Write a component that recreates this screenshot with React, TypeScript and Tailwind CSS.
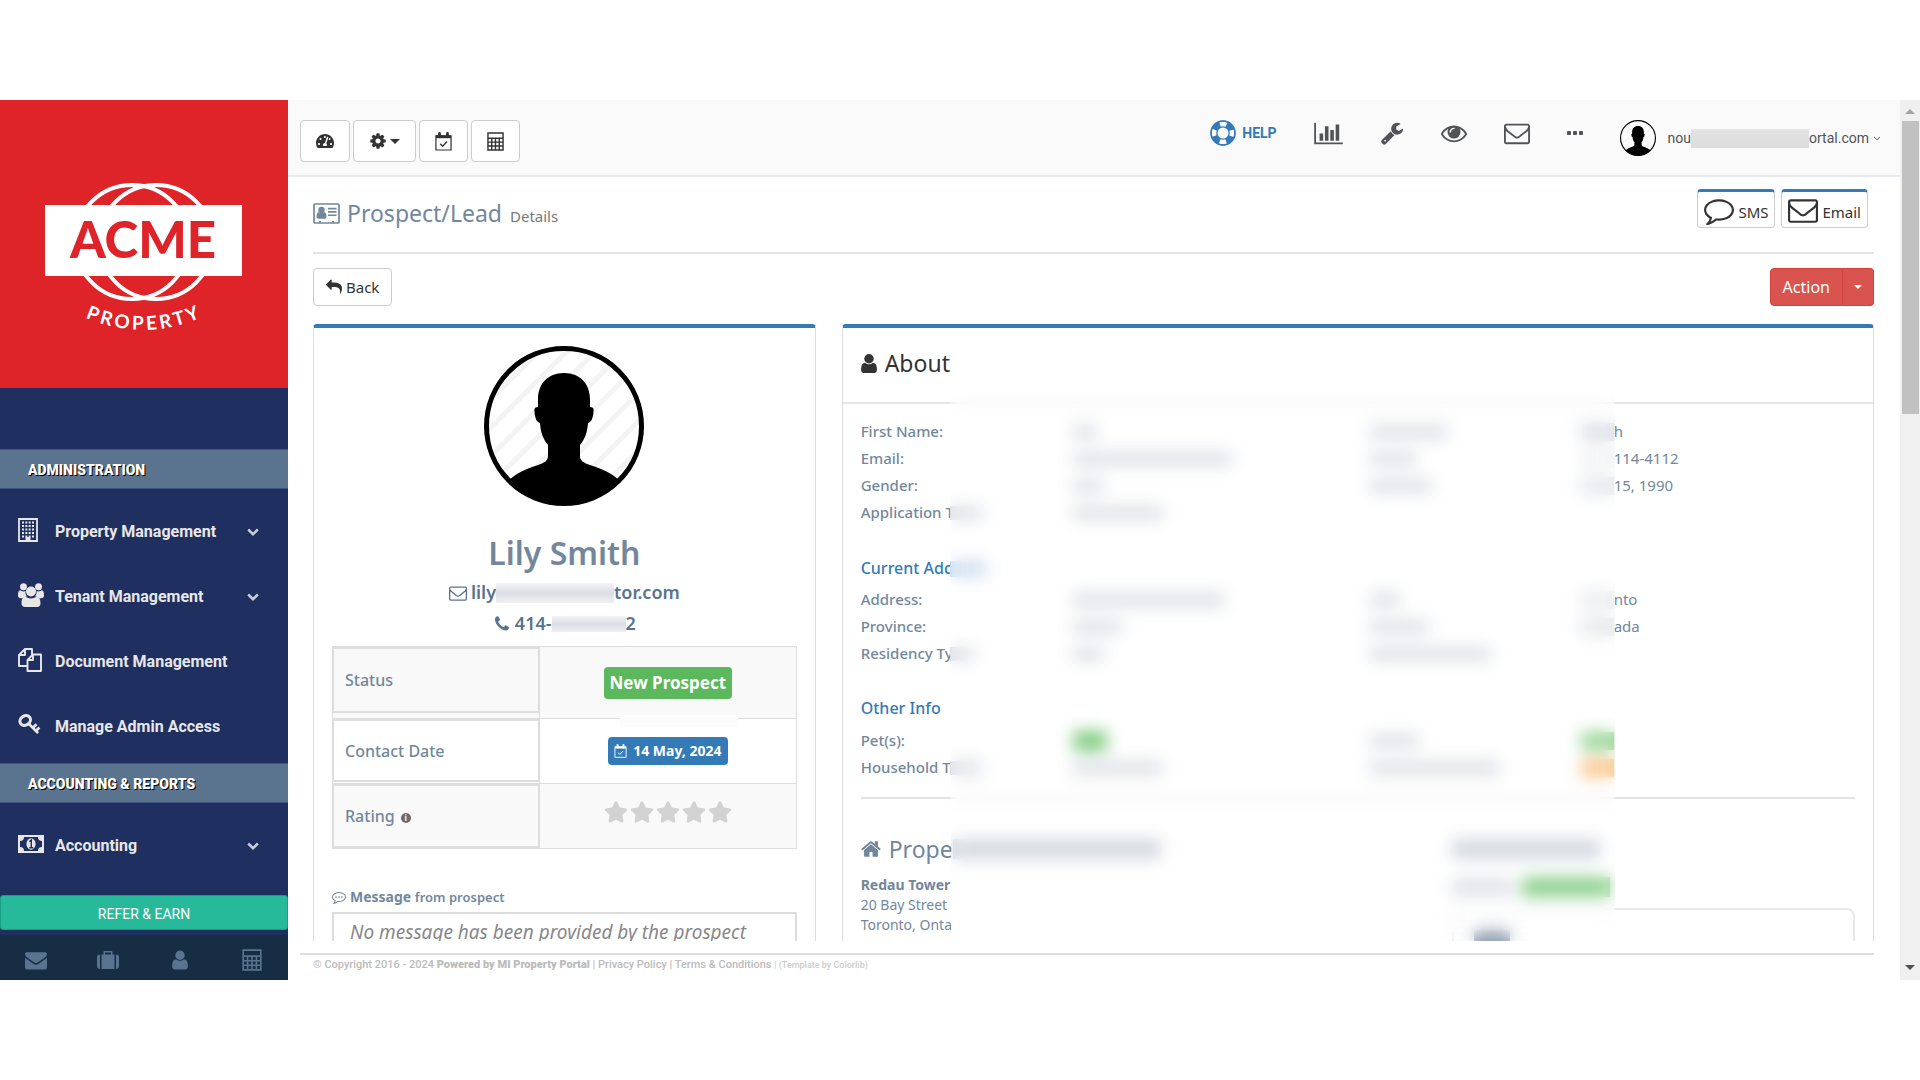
import type { ReactNode } from "react";
import { FaStar, FaTachometerAlt } from "react-icons/fa";

type IconProps = { className?: string };

function Glyph({ d, box = "0 0 1792 1792", className }: { d: string; box?: string; className?: string }) {
  return (
    <svg viewBox={box} className={className} fill="currentColor" aria-hidden="true">
      <path d={d} />
    </svg>
  );
}

const paths = {
  envelopeO:
    "M1664 1504v-768q-32 36-69 66-268 206-426 338-51 43-83 67t-86.5 48.5-102.5 24.5h-2q-48 0-102.5-24.5t-86.5-48.5-83-67q-158-132-426-338-37-30-69-66v768q0 13 9.5 22.5t22.5 9.5h1472q13 0 22.5-9.5t9.5-22.5zm0-1051v-24.5l-.5-13-3-12.5-5.5-9-9-7.5-14-2.5h-1472q-13 0-22.5 9.5t-9.5 22.5q0 168 147 284 193 152 401 317 6 5 35 29.5t46 37.5 44.5 31.5 50.5 27.5 43 9h2q20 0 43-9t50.5-27.5 44.5-31.5 46-37.5 35-29.5q208-165 401-317 54-43 100.5-115.5t46.5-131.5zm128-37v1088q0 66-47 113t-113 47h-1472q-66 0-113-47t-47-113v-1088q0-66 47-113t113-47h1472q66 0 113 47t47 113z",
  envelope:
    "M1792 710v794q0 66-47 113t-113 47h-1472q-66 0-113-47t-47-113v-794q44 49 101 87 362 246 497 345 57 42 92.5 65.5t94.5 48 110 24.5h2q51 0 110-24.5t94.5-48 92.5-65.5q170-123 498-345 57-39 100-87zm0-294q0 79-49 151t-122 123q-376 261-468 325-10 7-42.5 31t-54 38.5-52 32.5-57.5 27-50 9h-2q-23 0-50-9t-57.5-27-52-32.5-54-38.5-42.5-31q-91-64-262-182.5t-205-142.5q-62-42-117-115.5t-55-136.5q0-78 41.5-130t118.5-52h1472q65 0 112.5 47t47.5 113z",
  phone:
    "M1600 1240q0 27-10 70.5t-21 68.5q-21 50-122 106-94 51-186 51-27 0-53-3.5t-57.5-12.5-47-14.5-55.5-20.5-49-18q-98-35-175-83-127-79-264-216t-216-264q-48-77-83-175-3-9-18-49t-20.5-55.5-14.5-47-12.5-57.5-3.5-53q0-92 51-186 56-101 106-122 25-11 68.5-21t70.5-10q14 0 21 3 18 6 53 76 11 19 30 54t35 63.5 31 53.5q3 4 17.5 25t21.5 35.5 7 28.5q0 20-28.5 50t-62 55-62 53-28.5 46q0 9 5 22.5t8.5 20.5 14 24 11.5 19q76 137 174 235t235 174q2 1 19 11.5t24 14 20.5 8.5 22.5 5q18 0 46-28.5t53-62 55-62 50-28.5q14 0 28.5 7t35.5 21.5 25 17.5q25 15 53.5 31t63.5 35 54 30q70 35 76 53 3 7 3 21z",
  user:
    "M1536 1399q0 109-62.5 187t-150.5 78h-854q-88 0-150.5-78t-62.5-187q0-85 8.5-160.5t31.5-152 58.5-131 94-89 134.5-34.5q131 128 313 128t313-128q76 0 134.5 34.5t94 89 58.5 131 31.5 152 8.5 160.5zm-256-887q0 159-112.5 271.5t-271.5 112.5-271.5-112.5-112.5-271.5 112.5-271.5 271.5-112.5 271.5 112.5 112.5 271.5z",
  home:
    "M1472 992v480q0 26-19 45t-45 19h-384v-384h-256v384h-384q-26 0-45-19t-19-45v-480q0-1 .5-3t.5-3l575-474 575 474q1 2 1 6zm223-69l-62 74q-8 9-21 11h-3q-13 0-21-7l-692-577-692 577q-12 8-24 7-13-2-21-11l-62-74q-8-10-7-23.5t11-21.5l719-599q32-26 76-26t76 26l244 204v-195q0-14 9-23t23-9h192q14 0 23 9t9 23v408l219 182q10 8 11 21.5t-7 23.5z",
  cog:
    "M1152 896q0-106-75-181t-181-75-181 75-75 181 75 181 181 75 181-75 75-181zm512-109v222q0 12-8 23t-20 13l-185 28q-19 54-39 91 35 50 107 138 10 12 10 25t-9 23q-27 37-99 108t-94 71q-12 0-26-9l-138-108q-44 23-91 38-16 136-29 186-7 28-36 28h-222q-14 0-24.5-8.5t-11.5-21.5l-28-184q-49-16-90-37l-141 107q-10 9-25 9-14 0-25-11-126-114-165-168-7-10-7-23 0-12 8-23 15-21 51-66.5t54-70.5q-27-50-41-99l-183-27q-13-2-21-12.5t-8-23.5v-222q0-12 8-23t19-13l186-28q14-46 39-92-40-57-107-138-10-12-10-24 0-10 9-23 26-36 98.5-107.5t94.5-71.5q13 0 26 10l138 107q44-23 91-38 16-136 29-186 7-28 36-28h222q14 0 24.5 8.5t11.5 21.5l28 184q49 16 90 37l142-107q9-9 24-9 13 0 25 10 129 119 165 170 7 8 7 22 0 12-8 23-15 21-51 66.5t-54 70.5q26 50 41 98l183 28q13 2 21 12.5t8 23.5z",
  wrench:
    "M448 1472q0-26-19-45t-45-19-45 19-19 45 19 45 45 19 45-19 19-45zm644-420l-682 682q-37 37-90 37-52 0-91-37l-106-108q-38-36-38-90 0-53 38-91l681-681q39 98 114.5 173.5t173.5 114.5zm634-435q0 39-23 106-47 134-164.5 217.5t-258.5 83.5q-185 0-316.5-131.5t-131.5-316.5 131.5-316.5 316.5-131.5q58 0 121.5 16.5t107.5 46.5q16 11 16 28t-16 28l-293 169v224l193 107q5-3 79-48.5t135.5-81 70.5-35.5q15 0 23.5 10t8.5 25z",
  reply:
    "M1792 1120q0 166-127 451-3 7-10.5 24t-13.5 30-13 22q-12 17-28 17-15 0-23.5-10t-8.5-25q0-9 2.5-26.5t2.5-23.5q5-68 5-123 0-101-17.5-181t-48.5-138.5-80-101-105.5-69.5-133-42.5-154-21.5-175.5-6h-224v256q0 26-19 45t-45 19-45-19l-512-512q-19-19-19-45t19-45l512-512q19-19 45-19t45 19 19 45v256h224q713 0 875 403 53 134 53 333z",
  commentO:
    "M896 384q-204 0-381.5 69.5t-282 187.5-104.5 255q0 112 71.5 213.5t201.5 175.5l87 50-27 96q-24 91-70 172 152-63 275-171l43-38 57 6q69 8 130 8 204 0 381.5-69.5t282-187.5 104.5-255-104.5-255-282-187.5-381.5-69.5zm896 512q0 174-120 321.5t-326 233-450 85.5q-70 0-145-8-198 175-460 242-49 14-114 22h-5q-15 0-27-10.5t-16-27.5v-1q-3-4-.5-12t2-10 4.5-9.5l6-9 7-8.5 8-9q7-8 31-34.5t34.5-38 31-39.5 32.5-51 27-59 26-76q-157-89-247.5-220t-90.5-281q0-174 120-321.5t326-233 450-85.5 450 85.5 326 233 120 321.5z",
  eye:
    "M1664 960q-152-236-381-353 61 104 61 225 0 185-131.5 316.5t-316.5 131.5-316.5-131.5-131.5-316.5q0-121 61-225-229 117-381 353 133 205 333.5 326.5t434.5 121.5 434.5-121.5 333.5-326.5zm-720-384q0-20-14-34t-34-14q-125 0-214.5 89.5t-89.5 214.5q0 20 14 34t34 14 34-14 14-34q0-86 61-147t147-61q20 0 34-14t14-34zm848 384q0 34-20 69-140 230-376.5 368.5t-499.5 138.5-499.5-139-376.5-368q-20-35-20-69t20-69q140-229 376.5-368t499.5-139 499.5 139 376.5 368q20 35 20 69z",
  barChart:
    "M640 896v512h-256v-512h256zm384-512v1024h-256v-1024h256zm1024 1152v128h-2048v-1536h128v1408h1920zm-640-896v768h-256v-768h256zm384-384v1152h-256v-1152h256z",
};

function Chevron({ className }: IconProps) {
  return (
    <svg viewBox="0 0 12 8" className={className} fill="none" stroke="currentColor" aria-hidden="true">
      <path d="M1.200 1.500L6 6.200l4.800-4.700" />
    </svg>
  );
}

function LifeRing({ className }: IconProps) {
  return (
    <svg viewBox="0 0 26 26" className={className} fill="none" stroke="currentColor" aria-hidden="true">
      <circle cx="13" cy="13" r="9" strokeWidth="7" />
      <circle cx="13" cy="13" r="9" stroke="#fafafa" strokeWidth="4.5" strokeDasharray="6.6 7.54" strokeDashoffset="3.3" />
      <circle cx="13" cy="13" r="12" strokeWidth="1.5" />
    </svg>
  );
}

function CalendarCheck({ className }: IconProps) {
  return (
    <svg viewBox="0 0 18 20" className={className} fill="none" stroke="currentColor" aria-hidden="true">
      <path d="M1 4h16v15H1z" strokeWidth="1.3" />
      <path d="M1 3.500h16v3H1z" fill="currentColor" stroke="none" />
      <path d="M4.800 1.500v3.500M13.200 1.500v3.500" strokeWidth="3" strokeLinecap="round" />
      <path d="M5.500 12.300l2.600 2.700 4.600-5" strokeWidth="1.400" />
    </svg>
  );
}

function Calculator({ className }: IconProps) {
  return (
    <svg viewBox="0 0 18 20" className={className} fill="none" stroke="currentColor" aria-hidden="true">
      <path d="M1 1h16v18H1z" strokeWidth="1.5" />
      <path d="M1 6.500h16M1 10.700h16M1 14.800h16M5 6v13M9 6v13M13 6v13" strokeWidth="1.5" />
    </svg>
  );
}

function Building({ className }: IconProps) {
  return (
    <svg viewBox="0 0 20 24" className={className} fill="none" stroke="currentColor" aria-hidden="true">
      <path d="M1 1h18v22H1z" strokeWidth="1.800" />
      <path d="M4 4.500h12M4 8h12M4 11.500h12M4 15h12M4 18.500h12" strokeWidth="2" strokeDasharray="2 1.330" />
      <path d="M7.500 19h5v4h-5z" fill="currentColor" stroke="none" />
    </svg>
  );
}

function Users({ className }: IconProps) {
  return (
    <svg viewBox="0 0 26 24" className={className} fill="currentColor" aria-hidden="true">
      <circle cx="5.500" cy="3.700" r="3.500" />
      <circle cx="20.500" cy="3.700" r="3.500" />
      <path d="M0 12.500c0-3 .7-5.200 2-5.200 2 1.300 4 1.300 5.500.7-.4 2.300.2 4 1.500 5.600-1.700 0-2.800.5-3.800 1.600H3c-2 0-3-.9-3-2.700zM26 12.500c0-3-.7-5.200-2-5.200-2 1.300-4 1.300-5.500.7.4 2.300-.2 4-1.500 5.600 1.700 0 2.800.5 3.800 1.600H23c2 0 3-.9 3-2.700z" />
      <circle cx="13" cy="8.500" r="5" />
      <path d="M3.500 20.500c0-4 1.200-6.700 4.300-6.700 3 2.300 7.400 2.300 10.400 0 3.100 0 4.300 2.700 4.300 6.700 0 2-1.500 3.500-3.500 3.500H7c-2 0-3.500-1.500-3.500-3.500z" />
    </svg>
  );
}

function Files({ className }: IconProps) {
  return (
    <svg viewBox="0 0 24 24" className={className} fill="none" stroke="currentColor" strokeWidth="1.900" strokeLinejoin="round" aria-hidden="true">
      <path d="M9 18H1V7l6-6h7v6M7 1v6H1" />
      <path d="M15 6.500h8V23H9.500V12zM15 6.500V12H9.500" />
    </svg>
  );
}

function Key({ className }: IconProps) {
  return (
    <svg viewBox="0 0 24 22" className={className} fill="none" stroke="currentColor" aria-hidden="true">
      <ellipse cx="7.500" cy="6.800" rx="5.800" ry="4.800" strokeWidth="3.200" transform="rotate(-35 7.500 6.800)" />
      <path d="M10.500 9.500l10.500 10.500M16.200 13.800l3.200-3M19.400 17l3-2.800" strokeWidth="2.800" />
    </svg>
  );
}

function Money({ className }: IconProps) {
  return (
    <svg viewBox="0 0 26 18" className={className} aria-hidden="true">
      <path d="M0 0h26v18H0z" fill="currentColor" />
      <path d="M6 2h14a4 4 0 0 0 4 4v6a4 4 0 0 0-4 4H6a4 4 0 0 0-4-4V6a4 4 0 0 0 4-4z" fill="#1f2f60" />
      <ellipse cx="13" cy="9" rx="4.600" ry="5.800" fill="currentColor" />
      <path d="M11.400 6.600L13.300 5v7.500M11.300 12.700h4" stroke="#1f2f60" strokeWidth="1.400" fill="none" />
    </svg>
  );
}

function Suitcase({ className }: IconProps) {
  return (
    <svg viewBox="0 0 22 18" className={className} fill="currentColor" aria-hidden="true">
      <path d="M3 3.500V18a3 3 0 0 1-3-3V6.500a3 3 0 0 1 3-3zM19 3.500V18a3 3 0 0 0 3-3V6.500a3 3 0 0 0-3-3z" />
      <path d="M4.500 3.500h2V1.200C6.500.5 7 0 7.700 0h6.600c.7 0 1.200.5 1.200 1.200v2.300h2V18h-13zM8 1.500v2h6v-2z" fillRule="evenodd" />
    </svg>
  );
}

function AddressCard({ className }: IconProps) {
  return (
    <svg viewBox="0 0 27 21" className={className} fill="currentColor" aria-hidden="true">
      <path d="M2 1h23a1 1 0 0 1 1 1v17a1 1 0 0 1-1 1H2a1 1 0 0 1-1-1V2a1 1 0 0 1 1-1z" fill="none" stroke="currentColor" strokeWidth="1.700" />
      <circle cx="8.500" cy="7" r="3.200" />
      <path d="M3.500 13.500c0-2.500.8-4.300 2.400-4.300 1.500 1.200 3.600 1.200 5.200 0 1.600 0 2.400 1.800 2.400 4.300 0 1.200-.8 2.300-1.800 2.300H5.300c-1 0-1.800-1.100-1.800-2.300z" />
      <path d="M15 4.800h8.500v1.700H15zM15 8.100h8.500v1.700H15zM15 11.400h8.500v1.700H15zM6 18h2v2H6zM19 18h2v2h-2z" />
    </svg>
  );
}

function Avatar({ id, className }: { id: string; className?: string }) {
  return (
    <svg viewBox="0 0 160 160" className={className} role="img" aria-label="Profile photo">
      <defs>
        <pattern id={`${id}-lines`} width="20" height="20" patternUnits="userSpaceOnUse" patternTransform="rotate(45)">
          <path d="M0 0h5v20H0z" fill="#f3f3f3" />
        </pattern>
        <clipPath id={`${id}-clip`}>
          <circle cx="80" cy="80" r="78" />
        </clipPath>
      </defs>
      <circle cx="80" cy="80" r="78" fill="#fff" />
      <circle cx="80" cy="80" r="78" fill={`url(#${id}-lines)`} />
      <path
        clipPath={`url(#${id}-clip)`}
        d="M80 27c17 0 26 12 26 26v8c3 0 4 1 3.500 5-.5 6-2 10-5.500 11-.5 9-3 16-8 22v11c0 5 4 7 10 9 12 4 22 8 30 16v30H24v-30c8-8 18-12 30-16 6-2 10-4 10-9V99c-5-6-7.500-13-8-22-3.500-1-5-5-5.500-11-.5-4 .5-5 3.500-5v-8c0-14 9-26 26-26z"
      />
      <circle cx="80" cy="80" r="77.500" fill="none" stroke="#000" strokeWidth="5" />
    </svg>
  );
}

function Logo() {
  return (
    <svg viewBox="0 0 288 288" className="w-full bg-[#de2329]" role="img" aria-label="Acme Property">
      <g fill="none" stroke="#fff" strokeWidth="4">
        <circle cx="132" cy="142" r="57" />
        <circle cx="156" cy="142" r="57" />
      </g>
      <path d="M45 105h197v71H45z" fill="#fff" />
      <text x="143" y="158" textAnchor="middle" fill="#de2329" fontFamily="Lato, sans-serif" fontWeight="900" fontSize="51">
        ACME
      </text>
      <path id="logo-arc" d="M78 214A141 141 0 0 0 208 214" fill="none" />
      <text fill="#fff" fontFamily="Lato, sans-serif" fontWeight="700" fontSize="19" letterSpacing="3" textAnchor="middle">
        <textPath href="#logo-arc" startOffset="51%">
          PROPERTY
        </textPath>
      </text>
    </svg>
  );
}

type NavItem = { label: string; icon: ReactNode; expandable?: boolean };

const administration: NavItem[] = [
  { label: "Property Management", icon: <Building className="h-6 w-5" />, expandable: true },
  { label: "Tenant Management", icon: <Users className="h-6 w-[26px]" />, expandable: true },
  { label: "Document Management", icon: <Files className="size-6" /> },
  { label: "Manage Admin Access", icon: <Key className="h-[21px] w-[23px]" /> },
];

const accounting: NavItem[] = [
  { label: "Accounting", icon: <Money className="h-[18px] w-[26px]" />, expandable: true },
];

function NavSection({ title, items }: { title: string; items: NavItem[] }) {
  return (
    <section>
      <h3 className="flex h-10 items-center border-y border-[#3f5680] bg-[#5a738e] pt-px pl-7 text-sm font-black text-white [text-shadow:1px_1px_#000]">
        {title}
      </h3>
      <ul className="pt-2.5 pb-1">
        {items.map((item) => (
          <li key={item.label}>
            <a href="#" className="flex h-[65px] items-center pr-[29px] pl-[18px] text-base font-bold text-[#e7e7e7]">
              <span className="w-[37px] pb-1">{item.icon}</span>
              <span className="flex-1">{item.label}</span>
              {item.expandable && <Chevron className="h-2 w-3 stroke-[2.500] text-[#c4cfda]" />}
            </a>
          </li>
        ))}
      </ul>
    </section>
  );
}

function Sidebar() {
  return (
    <aside className="flex w-72 shrink-0 flex-col bg-[#1f2f60] font-[Roboto,sans-serif]">
      <Logo />
      <nav className="mt-[61px]">
        <NavSection title="ADMINISTRATION" items={administration} />
        <NavSection title="ACCOUNTING & REPORTS" items={accounting} />
      </nav>
      <button type="button" className="mt-auto mb-[5px] h-[35px] rounded-[3px] border border-[#169f85] bg-[#26b99a] pt-[3px] text-sm text-white">
        REFER &amp; EARN
      </button>
      <div className="grid h-[45px] grid-cols-4 place-items-center bg-[#172d44] pt-1 text-[#5a738e]">
        <a href="#" aria-label="Messages"><Glyph d={paths.envelope} className="size-[22px]" /></a>
        <a href="#" aria-label="Portfolio"><Suitcase className="h-[18px] w-[22px]" /></a>
        <a href="#" aria-label="Profile"><Glyph d={paths.user} className="size-[22px]" /></a>
        <a href="#" aria-label="Calculator"><Calculator className="h-[22px] w-5" /></a>
      </div>
    </aside>
  );
}

function ToolButton({ label, children }: { label: string; children: ReactNode }) {
  return (
    <button
      type="button"
      aria-label={label}
      className="flex h-[42px] items-center gap-[3px] rounded-[4px] border border-[#ccc] bg-white px-[15px] text-[#333]"
    >
      {children}
    </button>
  );
}

function TopBar() {
  return (
    <header className="flex h-[77px] shrink-0 items-start justify-between border-b-2 border-[#e6e9ed] bg-[#fafafa] pr-[19px] pl-3 font-[Roboto,sans-serif] text-[#515356]">
      <div className="flex gap-[3px] pt-5">
        <ToolButton label="Dashboard"><FaTachometerAlt className="size-[18px]" /></ToolButton>
        <ToolButton label="Settings">
          <Glyph d={paths.cog} className="size-[18px]" />
          <span className="border-x-[5px] border-t-[5px] border-x-transparent border-t-[#333]" />
        </ToolButton>
        <ToolButton label="Calendar"><CalendarCheck className="h-[19px] w-[17px]" /></ToolButton>
        <ToolButton label="Calculator"><Calculator className="h-[19px] w-[17px]" /></ToolButton>
      </div>
      <div className="flex">
        <nav className="flex h-[66px] items-center gap-[37px] pr-[37px]">
          <a href="#" className="flex items-center gap-1.5 text-sm font-bold text-[#337ab7]">
            <LifeRing className="size-[26px]" />
            HELP
          </a>
          <a href="#" aria-label="Reports"><Glyph d={paths.barChart} box="0 0 2048 1792" className="h-[25px] w-[29px]" /></a>
          <a href="#" aria-label="Maintenance"><Glyph d={paths.wrench} className="size-6" /></a>
          <a href="#" aria-label="Views"><Glyph d={paths.eye} className="size-[26px]" /></a>
          <a href="#" aria-label="Mail"><Glyph d={paths.envelopeO} className="size-[26px]" /></a>
          <a href="#" aria-label="More" className="flex gap-[2px]">
            <span className="size-1 rounded-[1px] bg-[#515356]" />
            <span className="size-1 rounded-[1px] bg-[#515356]" />
            <span className="size-1 rounded-[1px] bg-[#515356]" />
          </a>
        </nav>
        <button type="button" className="flex h-[76px] items-center text-sm">
          <Avatar id="top" className="mr-3 size-9" />
          nou
          <span className="h-[19px] w-[118px] bg-linear-to-b from-[#e4e4e4] to-[#dcdcdc]" />
          ortal.com
          <Chevron className="ml-1 h-[5px] w-2 stroke-[1.500]" />
        </button>
      </div>
    </header>
  );
}

function Redacted({ className }: IconProps) {
  return <span className={`inline-block bg-linear-to-b from-[#f3f4f6] via-[#dadee5] to-[#eef0f2] ${className}`} />;
}

const cellClass = "flex items-center border-x border-y-2 border-[#dedede] pl-[11px]";

function ProfileCard() {
  return (
    <section className="rounded-[4px] border border-t-4 border-[#ddd] border-t-[#337ab7] px-[18px] pt-[18px]">
      <Avatar id="profile" className="mx-auto size-40" />
      <h2 className="mt-[27px] text-center text-[32px] leading-10 font-semibold">Lily Smith</h2>
      <div className="mt-1 flex flex-col items-center text-lg leading-[31px] font-semibold text-[#5a738e]">
        <p className="flex items-center">
          <Glyph d={paths.envelopeO} className="mr-1 size-[18px]" />
          lily
          <Redacted className="h-5 w-[118px]" />
          tor.com
        </p>
        <p className="flex items-center">
          <Glyph d={paths.phone} className="mr-1 size-[18px]" />
          414-
          <Redacted className="h-4 w-[74px]" />
          2
        </p>
      </div>
      <table className="mt-[7px] w-full border-collapse border border-[#ddd] text-base font-medium">
        <tbody>
          <tr className="h-[72px] border-b border-[#ddd] bg-[#f9f9f9]">
            <th scope="row" className="w-[207px] border-r border-[#ddd] p-0 align-top font-medium">
              <div className={`${cellClass} h-[66px]`}>Status</div>
            </th>
            <td className="text-center">
              <span className="inline-block rounded-[4px] bg-[#5cb85c] px-1.5 text-[17px] leading-8 font-bold text-white">New Prospect</span>
            </td>
          </tr>
          <tr className="h-[65px] border-b border-[#ddd]">
            <th scope="row" className="border-r border-[#ddd] p-0 align-top font-medium">
              <div className={`${cellClass} h-[63px]`}>Contact Date</div>
            </th>
            <td className="relative text-center">
              {/* masks the rule under the status label */}
              <span className="absolute -top-1 left-20 h-3 w-[118px] bg-[#fcfcfc]" />
              <span className="inline-flex items-center gap-1.5 rounded-[4px] bg-[#337ab7] px-1.5 text-sm leading-7 font-bold text-white">
                <CalendarCheck className="h-3.5 w-[13px]" />
                14 May, 2024
              </span>
            </td>
          </tr>
          <tr className="h-[65px] bg-[#f9f9f9]">
            <th scope="row" className="border-r border-[#ddd] p-0 align-top font-medium">
              <div className={`${cellClass} h-[64px]`}>
                Rating
                <span className="mt-1 ml-1.5 flex size-2.5 items-center justify-center rounded-full bg-[#6b6b6b] text-[8px] font-bold text-white">i</span>
              </div>
            </th>
            <td>
              <div className="flex justify-center gap-[2px] pb-2 text-[#d2d2d2]">
                {[1, 2, 3, 4, 5].map((n) => (
                  <FaStar key={n} className="size-6" />
                ))}
              </div>
            </td>
          </tr>
        </tbody>
      </table>
      <label htmlFor="message" className="mt-[38px] flex h-5 items-baseline text-sm font-bold">
        <svg viewBox="0 0 1792 1792" className="mr-1 size-3.5 self-center" fill="currentColor" aria-hidden="true">
          <path d={paths.commentO} />
          <circle cx="520" cy="896" r="110" />
          <circle cx="896" cy="896" r="110" />
          <circle cx="1272" cy="896" r="110" />
        </svg>
        Message&nbsp;<span className="text-[13px] font-semibold">from prospect</span>
      </label>
      <textarea
        id="message"
        readOnly
        value="No message has been provided by the prospect"
        className="mt-[5px] block h-24 w-full resize-none border-2 border-[#ddd] px-4 py-1 text-[19px] leading-7 text-[#888] italic outline-none"
      />
    </section>
  );
}

type Value = { hidden: string; text?: string };
type InfoRow = { label: string; tail?: string; value?: string; label2?: string; value2?: Value };

const smudge = "bg-[#dadee5]";

const personal: InfoRow[] = [
  { label: "First Name:", value: "w-6", label2: "w-[77px]", value2: { hidden: smudge, text: "h" } },
  { label: "Email:", value: "w-[159px]", label2: "w-[46px]", value2: { hidden: "bg-[#f1f2f5]", text: "114-4112" } },
  { label: "Gender:", value: "w-[30px]", label2: "w-[61px]", value2: { hidden: "bg-[#e4e7ec]", text: "15, 1990" } },
  { label: "Application T", tail: "w-8", value: "w-[89px]" },
];

const address: InfoRow[] = [
  { label: "Address:", value: "w-[152px]", label2: "w-[30px]", value2: { hidden: "bg-[#e9ebef]", text: "nto" } },
  { label: "Province:", value: "w-12", label2: "w-[58px]", value2: { hidden: "bg-[#e4e7ec]", text: "ada" } },
  { label: "Residency Ty", tail: "w-6", value: "w-[30px]", label2: "w-[120px]" },
];

const other: InfoRow[] = [
  { label: "Pet(s):", value: "w-[34px] bg-[#74c774] h-5", label2: "w-12", value2: { hidden: "bg-[#8fd28f]" } },
  { label: "Household T", tail: "w-8", value: "w-[89px]", label2: "w-[129px]", value2: { hidden: "bg-[#fac283]" } },
];

function InfoRows({ rows }: { rows: InfoRow[] }) {
  return (
    <dl>
      {rows.map((row) => (
        <div key={row.label} className="grid h-[27px] grid-cols-[212px_297px_211px_1fr] items-center text-[15px]">
          <dt className="flex items-center font-medium">
            <span className="w-[89px] overflow-hidden whitespace-nowrap">{row.label}</span>
            {row.tail && <span className={`h-3.5 ${row.tail} ${smudge}`} />}
          </dt>
          <dd>{row.value && <span className={`block ${row.value.includes("bg-") ? "" : "h-3.5 bg-[#dadee5]"} ${row.value}`} />}</dd>
          <dt>{row.label2 && <span className={`block h-3.5 ${row.label2} ${smudge}`} />}</dt>
          <dd className="flex items-center">
            {row.value2 && <span className={`h-[18px] w-[33px] ${row.value2.hidden}`} />}
            {row.value2?.text}
          </dd>
        </div>
      ))}
    </dl>
  );
}

function AboutCard() {
  return (
    <section className="relative rounded-[4px] border border-t-4 border-[#ddd] border-t-[#337ab7]">
      <h2 className="flex h-[76px] items-center border-b-2 border-[#e6e6e6] pb-1 pl-[18px] text-[23px] text-[#333]">
        <Glyph d={paths.user} box="256 128 1280 1536" className="mr-2 h-[19px] w-4" />
        About
      </h2>
      <div className="px-[18px] pt-3.5">
        <InfoRows rows={personal} />
        <h3 className="mt-[29px] mb-1 flex items-center text-base leading-[27px] font-medium text-[#337ab7]">
          <span className="w-[89px] overflow-hidden whitespace-nowrap">Current Add</span>
          <span className="h-4 w-9 bg-[#c9dbee]" />
        </h3>
        <InfoRows rows={address} />
        <h3 className="mt-7 mb-[5px] text-base leading-[27px] font-medium text-[#337ab7]">Other Info</h3>
        <InfoRows rows={other} />
        <hr className="mt-4 border-t-2 border-[#e3e3e3]" />
        <div className="mt-[34px] grid grid-cols-[591px_1fr]">
          <div>
            <h2 className="flex items-center text-[23px] leading-8">
              <Glyph d={paths.home} box="64 200 1664 1400" className="mr-2 h-[18px] w-5" />
              Prope
              <span className="h-5 w-[208px] bg-[#d0d6de]" />
            </h2>
            <address className="mt-2.5 text-sm leading-5 whitespace-nowrap not-italic">
              <strong>Redau Tower</strong>
              <br />
              20 Bay Street
              <br />
              Toronto, Onta
            </address>
          </div>
          <div>
            <div className="flex h-8 items-center">
              <span className="h-5 w-[148px] bg-[#d0d6de]" />
            </div>
            <div className="mt-2.5 flex h-6 items-center gap-2">
              <span className={`h-4 w-[62px] ${smudge}`} />
              <span className="h-5 w-[88px] bg-[#82cd82]" />
            </div>
            <div className="mt-[9px] h-24 rounded-t-lg border-2 border-[#e8e8e8] pt-5 pl-5">
              <span className="block h-5 w-9 bg-[#8a98ac]" />
            </div>
          </div>
        </div>
      </div>
      {/* privacy screen over the personal details */}
      <div className="absolute top-[64px] bottom-0 left-[108px] w-[664px] bg-[#fdfdfd]/10 backdrop-blur-[8px]" />
    </section>
  );
}

function Content() {
  return (
    <main className="min-h-0 flex-1 overflow-hidden pr-[26px] pl-[25px] pt-3">
      <div className="flex h-[65px] items-start justify-between border-b-2 border-[#e3e3e3]">
        <h1 className="flex h-12 items-center text-[23px]">
          <AddressCard className="mr-[7px] h-[21px] w-[27px]" />
          Prospect/Lead
          <small className="mt-1.5 ml-2 text-[15px] text-[#777]">Details</small>
        </h1>
        <div className="flex gap-1.5 pr-1.5 text-[15px] text-[#333]">
          <button type="button" className="flex h-[39px] items-center gap-1 rounded-[4px] border border-t-[3px] border-[#ccc] border-t-[#337ab7] px-1.5">
            <Glyph d={paths.commentO} className="size-[30px]" />
            <span className="pt-1.5">SMS</span>
          </button>
          <button type="button" className="flex h-[39px] items-center gap-1 rounded-[4px] border border-t-[3px] border-[#ccc] border-t-[#337ab7] px-1.5">
            <Glyph d={paths.envelopeO} className="size-[30px]" />
            <span className="pt-1.5">Email</span>
          </button>
        </div>
      </div>
      <div className="mt-3.5 flex justify-between">
        <button type="button" className="flex h-[38px] items-center gap-1 rounded-[4px] border border-[#ccc] px-3 text-[15px] text-[#333]">
          <Glyph d={paths.reply} className="size-4" />
          Back
        </button>
        <div className="flex text-base text-white">
          <button type="button" className="h-[38px] rounded-l-[4px] border border-[#d43f3a] bg-[#d9534f] px-3">Action</button>
          <button type="button" aria-label="More actions" className="flex items-center rounded-r-[4px] border border-l-0 border-[#d43f3a] bg-[#d9534f] px-[11px]">
            <span className="border-x-4 border-t-4 border-x-transparent border-t-white" />
          </button>
        </div>
      </div>
      <div className="mt-[18px] grid grid-cols-[503fr_1033fr] gap-[26px]">
        <ProfileCard />
        <AboutCard />
      </div>
    </main>
  );
}

function Footer() {
  return (
    <footer className="mt-3 mr-[26px] ml-3 h-[27px] border-t-2 border-[#ddd] pl-[13px] font-[Roboto,sans-serif] text-[11px] leading-5 font-medium text-[#bbb]">
      © Copyright 2016 - 2024 <strong className="font-black">Powered by MI Property Portal</strong> | <a href="#">Privacy Policy</a> |{" "}
      <a href="#">Terms &amp; Conditions</a>{" "}
      <span className="text-[9px] text-[#ccc]">
        | (Template by <a href="#">Colorlib</a>)
      </span>
    </footer>
  );
}

function Scrollbar() {
  return (
    <div className="flex w-5 shrink-0 flex-col items-center bg-[#f0f0f0]" aria-hidden="true">
      <span className="mt-[9px] mb-[7px] border-x-[5px] border-b-[5px] border-x-transparent border-b-[#a3a3a3]" />
      <span className="h-1/3 w-[17px] bg-[#c1c1c1]" />
      <span className="mt-auto mb-2.5 border-x-[5px] border-t-[5px] border-x-transparent border-t-[#505050]" />
    </div>
  );
}

export default function App() {
  return (
    <div className="flex h-screen bg-white py-[100px] font-['Noto_Sans',sans-serif] text-[#73879c]">
      <Sidebar />
      <div className="flex min-w-0 flex-1 flex-col">
        <TopBar />
        <Content />
        <Footer />
      </div>
      <Scrollbar />
    </div>
  );
}
